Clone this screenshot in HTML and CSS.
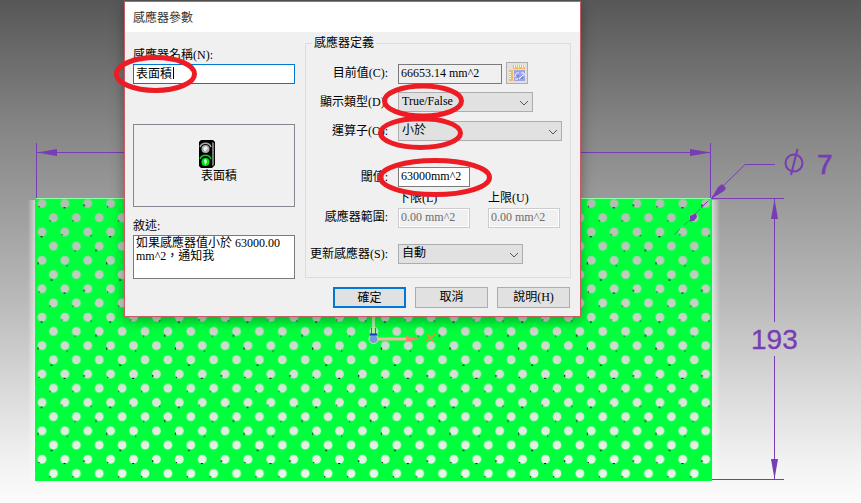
FILE: index.html
```html
<!DOCTYPE html>
<html lang="zh-Hant">
<head>
<meta charset="utf-8">
<title>感應器參數</title>
<link rel="stylesheet" href="styles.css">
</head>
<body>
<main class="viewport">
  <svg class="model" width="861" height="503" aria-hidden="true">
    <defs>
      <pattern id="holes" patternUnits="userSpaceOnUse" x="30.6" y="196.4" width="22.886" height="28.42">
        <circle cx="11.4" cy="7.1" r="4.4"/>
        <circle cx="0" cy="21.3" r="4.4"/>
        <circle cx="22.886" cy="21.3" r="4.4"/>
      </pattern>
      <pattern id="specks" patternUnits="userSpaceOnUse" x="30.6" y="196.4" width="68.658" height="85.26">
        <path d="M8 10h1v1h-1zM33 11h2v1h-2zM53 8h1v2h-1zM19 24h1v1h-1zM42 24h1v1h-1zM31 38h1v1h-1zM10 40h2v1h-2zM60 39h1v1h-1zM44 54h1v1h-1zM65 53h1v2h-1zM7 66h1v2h-1zM36 69h1v1h-1zM20 83h2v1h-2z"/>
      </pattern>
      <mask id="plate" maskUnits="userSpaceOnUse" x="0" y="0" width="861" height="503">
        <rect x="35" y="198" width="677" height="283" fill="#fff"/>
        <rect x="35" y="198" width="677" height="283" fill="url(#holes)"/>
      </mask>
      <linearGradient id="glow" x1="0" x2="1" y1="0" y2="0">
        <stop offset="0" stop-color="#efffef" stop-opacity=".65"/>
        <stop offset="1" stop-color="#fff" stop-opacity="0"/>
      </linearGradient>
      <linearGradient id="glow-left" x1="1" x2="0" y1="0" y2="0">
        <stop offset="0" stop-color="#efffef" stop-opacity=".6"/>
        <stop offset="1" stop-color="#fff" stop-opacity="0"/>
      </linearGradient>
    </defs>
    <rect x="712" y="200" width="8" height="281" fill="url(#glow)"/>
    <rect x="28" y="200" width="7" height="281" fill="url(#glow-left)"/>
    <rect x="35" y="198" width="677" height="283" fill="#d8f4d8" opacity=".4"/>
    <rect x="35" y="198" width="677" height="283" fill="#00ff3c" mask="url(#plate)"/>
    <rect x="35" y="198" width="677" height="283" fill="url(#specks)"/>
    <path d="M36 198.500H711" stroke="#8dffa8"/>

    <g class="dimension">
      <path d="M36.500 143V198M710.500 143V198M37 152.500H711M711 198.500H784M712 479.500H784M774.500 199V322M774.500 356V479M712 197L745 164.500H775"/>
      <path class="arrow" d="M37 152.500L57 149V156zM711 152.500L690 149V156zM774.500 199L771 219H778zM774.500 479L771 459H778zM711 199L718 187L722 184L726 188L724 191z"/>
      <circle cx="794" cy="163" r="8.500" stroke-width="2"/>
      <path d="M791 175L797.500 149" stroke-width="2"/>
      <path d="M708 201L701 208"/>
      <path class="arrow" d="M696 213L690 216V221H694L697 217z"/>
      <text x="817" y="174" stroke-width=".7">7</text>
      <text x="751" y="349" stroke-width=".3">193</text>
    </g>
    <path d="M700 209L695 214M691 219L684 225M680 229L674 235" stroke="#00b936"/>

    <g fill="none">
      <path d="M373.500 316V334" stroke="#a6f5a0" stroke-width="3"/>
      <path d="M371.500 328V334M375.500 328V334" stroke="#159b28"/>
      <path d="M378 339H407" stroke="#f3b9a4" stroke-width="3"/>
      <path d="M406 336L420 339L406 342z" fill="#ff8173"/>
      <circle cx="373.500" cy="339" r="4.500" fill="#7699dc" stroke="#e1e6a0"/>
      <path d="M370 334.500H377" stroke="#173eaf" stroke-width="2"/>
      <path d="M427 334L434 342M435 334L426 341" stroke="#ef8b40" stroke-width="1.500"/>
    </g>
  </svg>

  <section class="dialog" role="dialog" aria-labelledby="dialog-title">
    <header class="titlebar"><h1 id="dialog-title">感應器參數</h1></header>
    <form class="content">
      <div class="summary">
        <label for="sensor-name">感應器名稱(N):</label>
        <div class="name-box">
          <input id="sensor-name" class="name" type="text" value="表面積">
          <span class="caret"></span>
        </div>
        <div class="preview">
          <svg width="32" height="30" viewBox="0 0 32 30" aria-hidden="true">
            <path d="M3 1h12l2 2v23l-3 3H3l-2-2V3z" fill="#000"/>
            <path d="M14 3l2 1v22l-2 1z" fill="#777"/>
            <circle cx="7.500" cy="10" r="4" fill="#aaa"/>
            <path d="M5 9l3-2 2 2-3 4z" fill="#eee"/>
            <path d="M2 8c2-5 9-5 11 0" fill="none" stroke="#aaa" stroke-width="1.500"/>
            <circle cx="7.500" cy="23" r="4" fill="#00e816"/>
            <path d="M6 21l2-1 1 3-2 3z" fill="#dfffe0"/>
            <path d="M2 20c2-5 9-5 11 0" fill="none" stroke="#00d816" stroke-width="1.500"/>
          </svg>
          <span>表面積</span>
        </div>
        <label for="description">敘述:</label>
        <textarea id="description" readonly>如果感應器值小於 63000.00 mm^2，通知我</textarea>
      </div>

      <div class="settings">
        <fieldset class="definition">
          <legend>感應器定義</legend>
          <div class="row first">
            <label for="current">目前值(C):</label>
            <input id="current" class="wide readonly" type="text" value="66653.14 mm^2" readonly>
            <button class="measure" type="button" aria-label="量測">
              <svg width="18" height="18" viewBox="0 0 18 18" aria-hidden="true">
                <path d="M5 1h12v4H5z" fill="#f1b866"/>
                <path d="M6.500 1v3M8.500 1v2M10.500 1v3M12.500 1v2M14.500 1v3M16.500 1v2" stroke="#fff3cf"/>
                <path d="M1 6h4v11H1z" fill="#f1b866"/>
                <path d="M1 8.500h2M1 10.500h2M1 12.500h2M1 14.500h2" stroke="#fff3cf"/>
                <path d="M6 6h11v11H6z" fill="#9aa3e4"/>
                <path d="M7 13c0-3 2-5 4-4M11 15l4-4M13 9h3v3M7 15h3" fill="none" stroke="#f7f8ff"/>
                <path d="M9 12h2M13 14h2" stroke="#5867bc"/>
              </svg>
            </button>
          </div>
          <div class="row display">
            <label for="display">顯示類型(D):</label>
            <div class="select medium">
              <select id="display"><option>True/False</option></select>
              <svg width="10" height="6" aria-hidden="true"><path d="M1 1l4 4 4-4"/></svg>
            </div>
          </div>
          <div class="row">
            <label for="operator">運算子(O):</label>
            <div class="select large">
              <select id="operator"><option>小於</option></select>
              <svg width="10" height="6" aria-hidden="true"><path d="M1 1l4 4 4-4"/></svg>
            </div>
          </div>
          <div class="row threshold">
            <label for="threshold">閾值:</label>
            <input id="threshold" class="short" type="text" value="63000mm^2">
          </div>
          <div class="row range">
            <span class="range-label">感應器範圍:</span>
            <div class="limit">
              <label for="lower">下限(L)</label>
              <input id="lower" class="short" type="text" value="0.00 mm^2" disabled>
            </div>
            <div class="limit">
              <label for="upper">上限(U)</label>
              <input id="upper" class="short" type="text" value="0.00 mm^2" disabled>
            </div>
          </div>
          <div class="row update">
            <label for="update">更新感應器(S):</label>
            <div class="select small">
              <select id="update"><option>自動</option></select>
              <svg width="10" height="6" aria-hidden="true"><path d="M1 1l4 4 4-4"/></svg>
            </div>
          </div>
        </fieldset>
        <footer class="actions">
          <button class="primary" type="button">確定</button>
          <button type="button">取消</button>
          <button type="button">說明(H)</button>
        </footer>
      </div>
    </form>
    <svg class="marks" width="457" height="316" viewBox="124 1 457 316" aria-hidden="true">
      <ellipse cx="155.500" cy="74" rx="39" ry="16.500"/>
      <ellipse cx="423" cy="101" rx="38.500" ry="15"/>
      <ellipse cx="420.500" cy="133" rx="40" ry="14.500"/>
      <ellipse cx="435" cy="177.500" rx="54.500" ry="17"/>
    </svg>
  </section>
</main>
</body>
</html>
```
FILE: styles.css
```css
* { box-sizing: border-box; }

body {
  margin: 0;
  font: 12px/14px "Liberation Serif", "Noto Sans CJK TC", serif;
  color: #000;
}

.viewport {
  position: relative;
  min-height: 100vh;
  overflow: hidden;
  background: linear-gradient(#575757 0%, #868686 26%, #a2a2a2 45%, #bababa 60%, #dcdcdc 79%, #f2f2f2 92%, #fcfcfc 100%);
}

.model { display: block; }

.dimension { fill: none; stroke: #783cb4; }
.dimension .arrow { fill: #783cb4; stroke: none; }
.dimension text {
  font: 28px "Liberation Sans", sans-serif;
  fill: #783cb4;
}

.dialog {
  position: absolute;
  top: 1px;
  left: 124px;
  width: 457px;
  border: 1px solid #c95b65;
  background: #f0f0f0;
  box-shadow: 0 3px 12px rgba(0, 0, 0, .35);
}

.titlebar {
  display: flex;
  align-items: center;
  height: 30px;
  padding: 0 8px;
  background: #fff;
}

.titlebar h1 {
  margin: 0;
  font: 12px/14px "Noto Sans CJK TC", sans-serif;
  color: #333;
}

.content {
  display: flex;
  gap: 10px;
  padding: 4px 9px 8px 8px;
}

.summary {
  display: flex;
  flex-direction: column;
  width: 162px;
  padding-top: 12px;
}

.summary label { height: 16px; }

input, select, textarea, button {
  margin: 0;
  border: 1px solid #7a7a7a;
  border-radius: 0;
  font: inherit;
  color: inherit;
}

input {
  height: 20px;
  padding: 0 2px 2px;
  background: #fff;
}

.name-box { position: relative; display: flex; }
.name { width: 100%; border-color: #0078d7; }

.caret {
  position: absolute;
  top: 3px;
  left: 40px;
  width: 1px;
  height: 12px;
  background: #000;
}

.preview {
  display: flex;
  flex-direction: column;
  align-items: center;
  height: 83px;
  margin: 40px 0 12px;
  padding-top: 14px;
  border: 1px solid #828790;
}

.preview span { padding-left: 10px; }

textarea {
  height: 44px;
  padding: 1px 2px;
  line-height: 13px;
  background: #fff;
  resize: none;
  overflow: hidden;
}

.settings { flex: 1; min-width: 0; }

.definition {
  min-width: 0;
  height: 242px;
  margin: 0;
  padding: 0;
  border: 1px solid #dcdcdc;
}

legend {
  margin-left: 6px;
  padding: 0 2px;
}

.row {
  display: flex;
  align-items: center;
  height: 20px;
  margin-top: 9px;
}

.row > label, .range-label {
  width: 82px;
  margin-right: 10px;
  text-align: right;
  white-space: nowrap;
}

.first {
  align-items: flex-end;
  height: 22px;
  margin-top: 12px;
}

.first > label { padding-bottom: 4px; }
.display { margin-top: 8px; }
.wide { width: 104px; }
.readonly { background: #f0f0f0; }
.short { width: 72px; }

.measure {
  width: 22px;
  height: 22px;
  margin-left: 4px;
  padding: 1px;
  border-color: #adadad;
  background: #e1e1e1;
}

.measure svg { display: block; }

.select { position: relative; }
.medium { width: 135px; }
.large { width: 164px; }
.small { width: 125px; }

.select select {
  display: block;
  width: 100%;
  height: 20px;
  padding: 0 18px 2px 3px;
  border-color: #adadad;
  background: #e1e1e1;
  appearance: none;
}

.select svg {
  position: absolute;
  top: 8px;
  right: 4px;
  fill: none;
  stroke: #555;
  pointer-events: none;
}

.threshold { margin-top: 26px; }

.range {
  align-items: flex-end;
  height: 37px;
  margin-top: 4px;
}

.range-label { padding-bottom: 4px; }
.limit { width: 72px; margin-right: 18px; }
.limit:last-child { margin-right: 0; }
.limit label, .limit input { display: block; }
.limit label { margin-bottom: 3px; }

input:disabled {
  border-color: #ccc;
  background: #f0f0f0;
  color: #6d6d6d;
  box-shadow: inset 0 0 0 1px #fff;
}

.update { margin-top: 16px; }

.actions {
  display: flex;
  justify-content: flex-end;
  gap: 9px;
  margin-top: 9px;
  padding-right: 1px;
}

.actions button {
  width: 73px;
  height: 21px;
  padding: 0 0 2px;
  border-color: #adadad;
  background: #e1e1e1;
}

.actions .primary { border: 2px solid #0078d7; padding: 0; }

.marks {
  position: absolute;
  top: -1px;
  left: -1px;
  overflow: visible;
  fill: none;
  stroke: #ed1c24;
  stroke-width: 5px;
  pointer-events: none;
}
```
